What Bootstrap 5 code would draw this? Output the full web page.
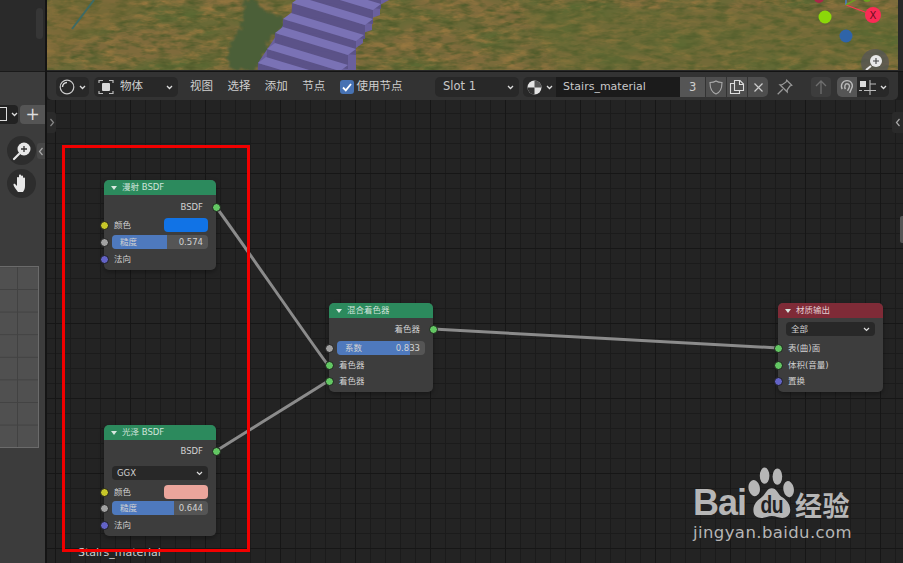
<!DOCTYPE html>
<html lang="zh">
<head>
<meta charset="utf-8">
<title>Blender</title>
<link href="https://cdn.jsdelivr.net/npm/bootstrap@5.3.0/dist/css/bootstrap.min.css" rel="stylesheet">
<style>
html,body{height:563px;overflow:hidden;background:#1c1c1c;}
body{font-family:"DejaVu Sans","Noto Sans CJK SC",sans-serif;color:#d0d0d0;position:relative;}
.shell{width:903px;height:563px;}
.side{width:45px;flex:none;}
.side-top{height:71px;background:#2a2a2a;justify-content:flex-end;padding:8px 2px 0 0;}
.thumb{width:7px;height:31px;background:#363636;border-radius:4px;}
.side-main{flex:1;background:#3c3c3c;min-height:0;position:relative;border-top:1px solid #1a1a1a;padding-top:32px;}
.side-head{height:20px;}
.side-drop{width:18px;height:19px;background:#222;border-radius:0 4px 4px 0;}
.side-ic{width:7px;height:14px;border:1px solid #ddd;border-left:0;}
.side-plus{width:25px;height:19px;background:#555;border-radius:4px 0 0 4px;color:#ddd;font-size:17px;line-height:18px;}
.tools{padding:12px 0 0 7px;gap:4px;}
.round-tool{width:29px;height:29px;border-radius:50%;background:#2d2d2d;}
.side-tab{position:absolute;left:37px;top:71px;width:8px;height:16px;background:#484848;border-radius:3px 0 0 3px;}
.uvbox{position:absolute;left:-2px;top:194px;width:41px;height:182px;border:1px solid #6b6b6b;background-color:#505050;
background-image:linear-gradient(#424242 1px,transparent 1px),linear-gradient(90deg,#424242 1px,transparent 1px);background-size:100% 22.6px,22px 100%;background-position:0 22px,-4px 0;}
.gap-bar{width:2px;flex:none;background:#141414;}
.main{flex:1;min-width:0;}
.viewport{height:71px;flex:none;background:#282828;padding-right:5px;}
.view-svg{display:block;width:851px;height:70px;}
.hdr{height:29px;flex:none;background:#1d1d1d;padding-right:5px;border-top:1px solid #141414;}
.hdr-in{flex:1;background:#333;border-radius:0 0 5px 5px;height:28px;padding:2px 0 0 9px;font-size:11.5px;color:#cfcfcf;white-space:nowrap;}
.dark-ctl{height:20px;background:#282828;border-radius:5px;}
.c-type{width:33px;margin-right:5px;}
.c-mode{width:84px;padding:0 5px 0 4px;margin-right:12px;}
.mode-txt{margin-left:6px;}
.c-slot{width:84px;padding:0 5px 0 8px;margin-left:32.500px;margin-right:4px;color:#c8c8c8;}
.c-mat{width:33px;border-radius:5px 0 0 5px;}
.c-name{width:124px;height:20px;background:#1b1b1b;padding-left:7px;font-size:11px;color:#c9c9c9;line-height:20px;}
.c-num{width:25px;height:20px;background:#555;text-align:center;line-height:20px;}
.c-ic{width:20px;height:20px;background:#4e4e4e;margin-left:1px;}
.c-x{border-radius:0 5px 5px 0;}
.menu-i{width:23px;margin-right:14.400px;}
.chk{width:14px;height:14px;margin:0 3px 0 0;flex:none;}
.c-pin{width:20px;height:20px;margin-left:7px;margin-right:16px;}
.c-up{width:20px;height:20px;background:#3d3d3d;border-radius:4px;margin-right:6px;}
.c-snap{width:20px;height:20px;background:#555;border-radius:5px 0 0 5px;}
.c-grid{width:32px;height:20px;background:#282828;border-radius:0 5px 5px 0;}
.canvas{flex:1;position:relative;overflow:hidden;background-color:#232323;
background-image:linear-gradient(#161616 1px,transparent 1px),linear-gradient(90deg,#161616 1px,transparent 1px),linear-gradient(#1b1b1b 1px,transparent 1px),linear-gradient(90deg,#1b1b1b 1px,transparent 1px);
background-size:75px 75px,75px 75px,15px 15px,15px 15px;background-position:0 73px,8px 0,0 13px,8px 0;}
.wires{position:absolute;left:0;top:0;width:856px;height:463px;}
.wire{fill:none;stroke:#8b8b8b;stroke-width:3;}
.nd{position:absolute;background:#3d3d3d;border-radius:5px;font-size:8.5px;color:#d2d2d2;box-shadow:0 2px 5px rgba(0,0,0,.35);line-height:1;}
.nd-a{left:57px;top:80px;width:112px;height:90px;}
.nd-b{left:57px;top:325px;width:112px;height:111px;}
.nd-c{left:282px;top:203px;width:104px;height:89px;}
.nd-d{left:731px;top:203px;width:105px;height:89px;}
.nd-head{height:15px;border-radius:5px 5px 0 0;padding-left:7px;font-size:8.5px;gap:5px;color:#cfe3da;}
.hd-g{background:#2c8a5d;}
.hd-r{background:#7f2b37;color:#e3cfd3;}
.tri{width:0;height:0;border-left:3px solid transparent;border-right:3px solid transparent;border-top:4px solid #d8e8e0;}
.nrow{position:absolute;left:0;right:0;height:15px;display:flex;align-items:center;}
.lab{padding-left:10px;}
.out{justify-content:flex-end;padding-right:13px;}
.sock{position:absolute;top:4px;width:7px;height:7px;border-radius:50%;border:1px solid #1d1d1d;box-sizing:content-box;margin:-1px;}
.s-l{left:-3px;}
.s-r{right:-4px;}
.green{background:#63c763;}
.yellow{background:#c7c729;}
.gray{background:#a1a1a1;}
.violet{background:#6363c7;}
.swatch{position:absolute;right:8px;top:0;width:44px;height:14px;border-radius:4px;}
.sw-blue{background:#1173e6;}
.sw-pink{background:#eba59c;}
.sld{position:absolute;left:8px;right:8px;top:0;height:14px;border-radius:4px;background:#555;overflow:hidden;display:flex;align-items:center;justify-content:space-between;padding:0 5px 0 8px;}
.sld-fill{position:absolute;left:0;top:0;bottom:0;background:#4e79bd;}
.sld span{position:relative;}
.sel{position:absolute;left:8px;right:8px;top:0;height:14px;border-radius:4px;background:#282828;display:flex;align-items:center;justify-content:space-between;padding:0 5px;}
.r1{top:20px}.r2{top:38px}.r3{top:55px}.r4{top:72px}
.b1{top:19px}.b2{top:41px}.b3{top:60px}.b4{top:76px}.b5{top:93px}
.c1{top:19px}.c2{top:38px}.c3{top:55px}.c4{top:71px}
.frame{position:absolute;left:62px;top:145px;width:188px;height:407px;border:3px solid #f20000;z-index:3;pointer-events:none;}
.mat-name{position:absolute;left:31px;top:445px;font-size:11px;color:#cfcfcf;}
.tab-r{position:absolute;right:0;top:12px;width:11px;height:21px;background:#2a2a2a;border-radius:3px 0 0 3px;}
.tab-l{position:absolute;left:0;top:12px;width:9px;height:21px;background:#2a2a2a;border-radius:0 3px 3px 0;}
.scroll-r{position:absolute;right:0;top:116px;width:3px;height:27px;background:#555;border-radius:2px 0 0 2px;}
.wm{position:absolute;left:647px;top:366px;width:175px;height:80px;color:#b6b6b6;}
.wm-bai{position:absolute;left:-1px;top:19px;font:bold 36px/36px "Liberation Sans",sans-serif;letter-spacing:-1px;}
.wm-paw{position:absolute;left:53px;top:1px;width:48px;height:51px;}
.wm-jy{position:absolute;left:101px;top:23px;font:bold 27px/32px "Noto Sans CJK SC",sans-serif;letter-spacing:.5px;white-space:nowrap;}
.wm-url{position:absolute;left:-1px;top:57px;font:16.5px/20px "DejaVu Sans",sans-serif;white-space:nowrap;letter-spacing:.4px;}
</style>
</head>
<body>
<div class="shell d-flex">
  <aside class="side d-flex flex-column">
    <div class="side-top d-flex"><div class="thumb"></div></div>
    <div class="side-main">
      <div class="side-head d-flex align-items-center justify-content-between">
        <div class="side-drop d-flex align-items-center gap-1">
          <span class="side-ic"></span>
          <svg width="7" height="5" viewBox="0 0 7 5"><path d="M1 1l2.500 2.500L6 1" fill="none" stroke="#ddd" stroke-width="1.300"/></svg>
        </div>
        <div class="side-plus text-center">+</div>
      </div>
      <div class="tools d-flex flex-column">
        <div class="round-tool d-flex align-items-center justify-content-center">
          <svg width="22" height="22" viewBox="0 0 22 22"><circle cx="13" cy="9" r="6.500" fill="#e8e8e8"/><path d="M8 14l-5 5" stroke="#e8e8e8" stroke-width="2.200" stroke-linecap="round"/><path d="M13 6v6M10 9h6" stroke="#333" stroke-width="1.300"/></svg>
        </div>
        <div class="round-tool d-flex align-items-center justify-content-center">
          <svg width="20" height="21" viewBox="0 0 20 21"><path d="M6 19C4 16 2 14 1.500 12c-.3-1.200 1-1.600 1.800-.8L5 13V5c0-1.400 2-1.400 2 0v5-7.500c0-1.400 2-1.400 2 0V10V3.500c0-1.400 2-1.400 2 0V10V5.500c0-1.400 2-1.400 2 0V13c0 3-1 4.500-2 6z" fill="#e8e8e8"/></svg>
        </div>
      </div>
      <div class="side-tab d-flex align-items-center justify-content-center">
        <svg width="6" height="9" viewBox="0 0 6 9"><path d="M4.500 1L1.500 4.500l3 3.500" fill="none" stroke="#aaa" stroke-width="1.200"/></svg>
      </div>
      <div class="uvbox"></div>
    </div>
  </aside>
  <div class="gap-bar"></div>
  <div class="main d-flex flex-column">
    <section class="viewport">
      <svg class="view-svg" viewBox="47 0 851 70" preserveAspectRatio="none">
        <defs>
          <filter id="gr" x="0" y="0" width="100%" height="100%" color-interpolation-filters="sRGB">
            <feTurbulence type="fractalNoise" baseFrequency="0.05 0.14" numOctaves="4" seed="7"/>
            <feColorMatrix values="0 0 0 0 .60  0 0 0 0 .47  0 0 0 0 .25  2.600 0 0 0 -1.150"/>
          </filter>
          <filter id="gr2" x="0" y="0" width="100%" height="100%" color-interpolation-filters="sRGB">
            <feTurbulence type="fractalNoise" baseFrequency="0.012 0.035" numOctaves="3" seed="21"/>
            <feColorMatrix values="0 0 0 0 .36  0 0 0 0 .41  0 0 0 0 .20  0 3 0 0 -1.200"/>
          </filter>
          <filter id="gr3" x="0" y="0" width="100%" height="100%" color-interpolation-filters="sRGB">
            <feTurbulence type="fractalNoise" baseFrequency="0.07 0.2" numOctaves="3" seed="3"/>
            <feColorMatrix values="0 0 0 0 .32  0 0 0 0 .36  0 0 0 0 .17  0 0 2.400 0 -1"/>
          </filter>
          <filter id="bl"><feGaussianBlur stdDeviation="2.500"/></filter>
          <filter id="tree" x="-20%" y="-20%" width="140%" height="140%">
            <feTurbulence type="fractalNoise" baseFrequency="0.2" numOctaves="2" seed="4" result="n"/>
            <feDisplacementMap in="SourceGraphic" in2="n" scale="10"/>
            <feGaussianBlur stdDeviation="1.200"/>
          </filter>
        </defs>
        <rect x="47" y="0" width="851" height="70" fill="#7f6b3c"/>
        <rect x="47" y="0" width="851" height="70" filter="url(#gr2)"/>
        <rect x="47" y="0" width="851" height="70" filter="url(#gr)"/>
        <rect x="47" y="0" width="851" height="70" filter="url(#gr3)"/>
        <path d="M520 10H898V60L700 70H560Z" fill="#5f6a33" opacity=".35" filter="url(#bl)"/>
        <path d="M47 70V0H150C130 20 100 30 70 45Z" fill="#7a6a36" opacity=".35" filter="url(#bl)"/>
        <path d="M72 29L94 0" stroke="#3d6a64" stroke-width="2" fill="none"/>
        <path d="M243 0H257C258 8 264 12 282 16C286 22 278 34 270 40C266 50 262 60 258 70H232C224 62 226 48 236 36C242 24 246 12 243 0Z" fill="#4c5e38" filter="url(#tree)"/>
        <polygon points="258,70 356,70 356,48 363,43 363,33 372,30 372,18 380,15 380,5 389,0 300,0 258,63" fill="#6a609e"/>
        <g fill="#5b5288">
          <polygon points="258,63 331,85 331,99 257,91"/>
          <polygon points="267,49 340,71 340,85 266,77"/>
          <polygon points="275,33 348,55 348,69 274,61"/>
          <polygon points="283,19 356,41 356,55 282,47"/>
          <polygon points="292,3 365,25 365,39 291,31"/>
          <polygon points="300,-12 373,10 373,24 299,16"/>
          <polygon points="308,-27 381,-5 381,9 307,1"/>
        </g>
        <g fill="#7a72b5">
          <polygon points="258,63 266,57 339,79 331,85"/>
          <polygon points="267,49 275,43 348,65 340,71"/>
          <polygon points="275,33 283,27 356,49 348,55"/>
          <polygon points="283,19 291,13 364,35 356,41"/>
          <polygon points="292,3 300,-3 373,19 365,25"/>
          <polygon points="300,-12 308,-18 381,4 373,10"/>
          <polygon points="308,-27 316,-33 389,-11 381,-5"/>
        </g>
        <line x1="846" y1="5" x2="873" y2="15" stroke="#ff3355" stroke-width="1.200"/>
        <path d="M846 5L846 0" stroke="#4a80c8" stroke-width="1.500"/>
        <path d="M846 5L865 -6" stroke="#6da020" stroke-width="1.500"/>
        <circle cx="819" cy="-2" r="5" fill="#a82747"/>
        <circle cx="867" cy="-2" r="4" fill="#6da020"/>
        <circle cx="825" cy="17" r="6.500" fill="#8bd80a"/>
        <circle cx="873" cy="15" r="8" fill="#fb2b55"/>
        <text x="873" y="18.500" text-anchor="middle" font-size="10" font-family="DejaVu Sans" fill="#6b0d1f">X</text>
        <circle cx="846" cy="36" r="6.500" fill="#2f64a8"/>
        <circle cx="875" cy="63" r="14" fill="#555" opacity=".75"/>
        <circle cx="876" cy="61" r="6" fill="#e8e8e8"/>
        <path d="M871 66l-5 4" stroke="#e8e8e8" stroke-width="2"/>
        <path d="M876 58v6M873 61h6" stroke="#444" stroke-width="1.100"/>
      </svg>
    </section>
    <header class="hdr d-flex">
      <div class="hdr-in d-flex align-items-center">
        <div class="dark-ctl c-type d-flex align-items-center justify-content-center gap-1">
          <svg width="16" height="16" viewBox="0 0 16 16"><circle cx="8" cy="8" r="6.800" fill="none" stroke="#ccc" stroke-width="1.200"/><path d="M3.500 8A4.500 4.500 0 0 1 8 3.500" fill="none" stroke="#ddd" stroke-width="1.400"/></svg>
          <svg width="7" height="5" viewBox="0 0 7 5"><path d="M1 1l2.500 2.500L6 1" fill="none" stroke="#ddd" stroke-width="1.300"/></svg>
        </div>
        <div class="dark-ctl c-mode d-flex align-items-center">
          <svg width="16" height="16" viewBox="0 0 16 16"><rect x="4" y="4" width="8" height="8" rx="1" fill="#d8d8d8"/><path d="M1 4V1.500h4M11 1.500h4V4M15 12v2.500h-4M5 14.500H1V12" fill="none" stroke="#bbb" stroke-width="1.200"/></svg>
          <span class="mode-txt flex-grow-1">物体</span>
          <svg width="7" height="5" viewBox="0 0 7 5"><path d="M1 1l2.500 2.500L6 1" fill="none" stroke="#ddd" stroke-width="1.300"/></svg>
        </div>
        <span class="menu-i">视图</span><span class="menu-i">选择</span><span class="menu-i">添加</span><span class="menu-i">节点</span>
        <svg class="chk" viewBox="0 0 14 14"><rect width="14" height="14" rx="3" fill="#4772b3"/><path d="M3 7.500l2.800 2.800L11 4" fill="none" stroke="#fff" stroke-width="1.800"/></svg>
        <span>使用节点</span>
        <div class="dark-ctl c-slot d-flex align-items-center justify-content-between">
          <span>Slot 1</span>
          <svg width="7" height="5" viewBox="0 0 7 5"><path d="M1 1l2.500 2.500L6 1" fill="none" stroke="#ddd" stroke-width="1.300"/></svg>
        </div>
        <div class="dark-ctl c-mat d-flex align-items-center justify-content-center gap-1">
          <svg width="15" height="15" viewBox="0 0 15 15"><circle cx="7.500" cy="7.500" r="7" fill="#e4e4e4"/><path d="M7.500 7.500V14.500A7 7 0 0 1 .5 7.500Z" fill="#333"/><path d="M7.500 7.500V.5A7 7 0 0 1 14.500 7.500Z" fill="#555"/></svg>
          <svg width="7" height="5" viewBox="0 0 7 5"><path d="M1 1l2.500 2.500L6 1" fill="none" stroke="#ddd" stroke-width="1.300"/></svg>
        </div>
        <div class="c-name">Stairs_material</div>
        <div class="c-num">3</div>
        <div class="c-ic d-flex align-items-center justify-content-center">
          <svg width="14" height="15" viewBox="0 0 14 15"><path d="M7 1c2 1.300 3.500 1.500 6 1.500C13 9 11 12.500 7 14 3 12.500 1 9 1 2.500 3.500 2.500 5 2.300 7 1Z" fill="none" stroke="#aaa" stroke-width="1.100"/></svg>
        </div>
        <div class="c-ic d-flex align-items-center justify-content-center">
          <svg width="16" height="16" viewBox="0 0 16 16"><path d="M5.500 11.500V1.500H11l3.500 3.500V11.500ZM10.500 1.500V5.500H14.500M5.500 4.500H1.500V14.500H10.500V11.500" fill="none" stroke="#ddd" stroke-width="1.100"/></svg>
        </div>
        <div class="c-ic c-x d-flex align-items-center justify-content-center">
          <svg width="11" height="11" viewBox="0 0 11 11"><path d="M1.500 1.500l8 8M9.500 1.500l-8 8" stroke="#ccc" stroke-width="1.200"/></svg>
        </div>
        <div class="c-pin d-flex align-items-center justify-content-center">
          <svg width="18" height="18" viewBox="0 0 16 16"><path d="M1.500 14.500L6 10M9.500 2L14 6.500 12.500 7 10 10.500 10 12.500 3.500 6 5.500 6 9 3.500Z" fill="none" stroke="#999" stroke-width="1.100"/></svg>
        </div>
        <div class="c-up d-flex align-items-center justify-content-center">
          <svg width="14" height="16" viewBox="0 0 14 16"><path d="M7 15V2M2 7l5-5 5 5" fill="none" stroke="#6f6f6f" stroke-width="1.300"/></svg>
        </div>
        <div class="c-snap d-flex align-items-center justify-content-center">
          <svg width="16" height="16" viewBox="0 0 15 15"><path d="M3 9.500C1 5.500 3.500 1.500 7.500 1.500S14 5.500 11.500 9.500L10 13M6 9.500C4.800 7.500 5.500 4.500 7.500 4.500S10.500 6.500 9.300 8.500L8 11" fill="none" stroke="#bbb" stroke-width="1.300"/></svg>
        </div>
        <div class="c-grid d-flex align-items-center justify-content-center gap-1">
          <svg width="17" height="15" viewBox="0 0 17 15"><rect x="1" y="1" width="6" height="6" fill="#ddd"/><path d="M11 0V15M5 10.500H17M0 10.500H3M11 4H17" stroke="#bbb" stroke-width="1.100"/></svg>
          <svg width="7" height="5" viewBox="0 0 7 5"><path d="M1 1l2.500 2.500L6 1" fill="none" stroke="#ddd" stroke-width="1.300"/></svg>
        </div>
      </div>
    </header>
    <main class="canvas">
      <svg class="wires" viewBox="47 100 856 463">
        <path class="wire" d="M216 207C228 222 316 350 328 365"/>
        <path class="wire" d="M216 451C228 443 316 389 328 381"/>
        <path class="wire" d="M433 329C450 329 760 348 778 348"/>
      </svg>
      <div class="tab-l d-flex align-items-center justify-content-center"><svg width="6" height="9" viewBox="0 0 6 9"><path d="M1.500 1l3 3.500-3 3.500" fill="none" stroke="#888" stroke-width="1.200"/></svg></div>
      <div class="tab-r d-flex align-items-center justify-content-center"><svg width="6" height="9" viewBox="0 0 6 9"><path d="M4.500 1l-3 3.500 3 3.500" fill="none" stroke="#aaa" stroke-width="1.200"/></svg></div>
      <div class="scroll-r"></div>
      <div class="mat-name">Stairs_material</div>

      <article class="nd nd-a">
        <div class="nd-head hd-g d-flex align-items-center"><i class="tri"></i><span>漫射 BSDF</span></div>
        <div class="nrow out r1">BSDF<i class="sock s-r green"></i></div>
        <div class="nrow r2"><i class="sock s-l yellow"></i><span class="lab">颜色</span><div class="swatch sw-blue"></div></div>
        <div class="nrow r3"><i class="sock s-l gray"></i><div class="sld"><div class="sld-fill" style="width:57.4%"></div><span>糙度</span><span>0.574</span></div></div>
        <div class="nrow r4"><i class="sock s-l violet"></i><span class="lab">法向</span></div>
      </article>

      <article class="nd nd-b">
        <div class="nd-head hd-g d-flex align-items-center"><i class="tri"></i><span>光泽 BSDF</span></div>
        <div class="nrow out b1">BSDF<i class="sock s-r green"></i></div>
        <div class="nrow b2"><div class="sel"><span>GGX</span><svg width="7" height="5" viewBox="0 0 7 5"><path d="M1 1l2.500 2.500L6 1" fill="none" stroke="#ddd" stroke-width="1.200"/></svg></div></div>
        <div class="nrow b3"><i class="sock s-l yellow"></i><span class="lab">颜色</span><div class="swatch sw-pink"></div></div>
        <div class="nrow b4"><i class="sock s-l gray"></i><div class="sld"><div class="sld-fill" style="width:64.4%"></div><span>糙度</span><span>0.644</span></div></div>
        <div class="nrow b5"><i class="sock s-l violet"></i><span class="lab">法向</span></div>
      </article>

      <article class="nd nd-c">
        <div class="nd-head hd-g d-flex align-items-center"><i class="tri"></i><span>混合着色器</span></div>
        <div class="nrow out c1">着色器<i class="sock s-r green"></i></div>
        <div class="nrow c2"><i class="sock s-l gray"></i><div class="sld"><div class="sld-fill" style="width:83.3%"></div><span>系数</span><span>0.833</span></div></div>
        <div class="nrow c3"><i class="sock s-l green"></i><span class="lab">着色器</span></div>
        <div class="nrow c4"><i class="sock s-l green"></i><span class="lab">着色器</span></div>
      </article>

      <article class="nd nd-d">
        <div class="nd-head hd-r d-flex align-items-center"><i class="tri"></i><span>材质输出</span></div>
        <div class="nrow c1"><div class="sel"><span>全部</span><svg width="7" height="5" viewBox="0 0 7 5"><path d="M1 1l2.500 2.500L6 1" fill="none" stroke="#ddd" stroke-width="1.200"/></svg></div></div>
        <div class="nrow c2"><i class="sock s-l green"></i><span class="lab">表(曲)面</span></div>
        <div class="nrow c3"><i class="sock s-l green"></i><span class="lab">体积(音量)</span></div>
        <div class="nrow c4"><i class="sock s-l violet"></i><span class="lab">置换</span></div>
      </article>

      <div class="wm">
        <div class="wm-bai">Bai</div>
        <svg class="wm-paw" viewBox="0 0 60 53" preserveAspectRatio="none">
          <ellipse cx="9" cy="22" rx="7" ry="8.500" transform="rotate(-20 9 22)" fill="#b6b6b6"/>
          <ellipse cx="22" cy="9" rx="6" ry="8.500" fill="#b6b6b6"/>
          <ellipse cx="38" cy="10" rx="6" ry="8.500" fill="#b6b6b6"/>
          <ellipse cx="52" cy="23" rx="6.500" ry="8.500" transform="rotate(-15 52 23)" fill="#b6b6b6"/>
          <path d="M31 22C25 22 24 27 19 31C13 35 8 38 8 45C8 51 13 53 18 53C23 53 26 51 31 51C36 51 39 53 44 53C49 53 54 50 54 45C54 38 49 34 43 31C38 27 37 22 31 22Z" fill="#b6b6b6"/>
          <text x="31" y="48" text-anchor="middle" font-family="Liberation Sans" font-weight="700" font-size="24" fill="#222" letter-spacing="-.5">du</text>
        </svg>
        <div class="wm-jy">经验</div>
        <div class="wm-url">jingyan.baidu.com</div>
      </div>
    </main>
  </div>
</div>
<div class="frame"></div>
</body>
</html>
